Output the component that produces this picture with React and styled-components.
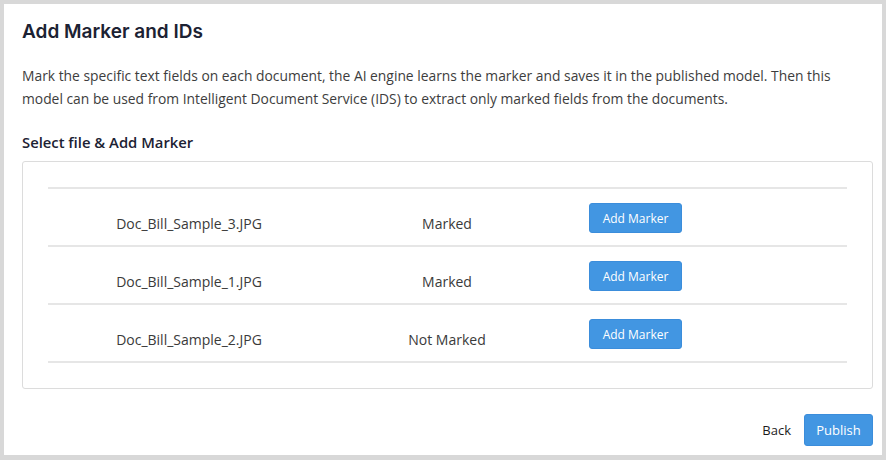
import styled, { createGlobalStyle } from 'styled-components';

const GlobalStyle = createGlobalStyle`
  html, body {
    margin: 0;
    padding: 0;
    background: #d8d8d8;
  }
  body {
    font-family: "Open Sans", "Noto Sans", sans-serif;
  }
`;

const files = [
  { name: 'Doc_Bill_Sample_3.JPG', status: 'Marked' },
  { name: 'Doc_Bill_Sample_1.JPG', status: 'Marked' },
  { name: 'Doc_Bill_Sample_2.JPG', status: 'Not Marked' },
];

const App = () => {
  return (
    <>
      <GlobalStyle />
      <StyledFrame>
        <StyledPanel>
          <StyledTitle>Add Marker and IDs</StyledTitle>
          <StyledIntro>
            Mark the specific text fields on each document, the AI engine learns the marker and saves it in the published model. Then this
            model can be used from Intelligent Document Service (IDS) to extract only marked fields from the documents.
          </StyledIntro>
          <StyledSectionTitle>Select file &amp; Add Marker</StyledSectionTitle>
          <StyledCard>
            <StyledList>
              {files.map((file) => (
                <StyledRow key={file.name}>
                  <StyledCell>{file.name}</StyledCell>
                  <StyledCell>{file.status}</StyledCell>
                  <StyledActionCell>
                    <StyledButton type="button">Add Marker</StyledButton>
                  </StyledActionCell>
                </StyledRow>
              ))}
            </StyledList>
          </StyledCard>
          <StyledFooter>
            <StyledLinkButton type="button">Back</StyledLinkButton>
            <StyledButton type="button" $size="large">Publish</StyledButton>
          </StyledFooter>
        </StyledPanel>
      </StyledFrame>
    </>
  );
};

export default App;

const StyledFrame = styled.div`
  padding: 4px 4px 5px 4px;
  height: 460px;
  box-sizing: border-box;
`;
const StyledPanel = styled.main`
  background: #fff;
  height: 100%;
  box-sizing: border-box;
  padding: 16px 9px 0 18px;
  display: flex;
  flex-direction: column;
`;
const StyledTitle = styled.h1`
  margin: 0;
  font-family: Inter, "Noto Sans", sans-serif;
  font-size: 19px;
  font-weight: 600;
  line-height: 24px;
  color: #1c2233;
`;
const StyledIntro = styled.p`
  margin: 20px 0 0;
  font-size: 13.85px;
  line-height: 23px;
  color: #3d3d3d;
`;
const StyledSectionTitle = styled.h2`
  margin: 22px 0 0;
  font-size: 14.8px;
  font-weight: 600;
  line-height: 20px;
  color: #1c2233;
`;
const StyledCard = styled.section`
  margin-top: 9px;
  border: 1px solid #dcdcdc;
  border-radius: 3px;
  padding: 25px;
`;
const StyledList = styled.div`
  border-top: 2px solid #e6e6e6;
`;
const StyledRow = styled.div`
  display: grid;
  grid-template-columns: 282px 234px 1fr;
  align-items: start;
  height: 56px;
  border-bottom: 2px solid #e6e6e6;
`;
const StyledCell = styled.div`
  padding-top: 25px;
  text-align: center;
  font-size: 14px;
  line-height: 20px;
  color: #3a3a3a;
`;
const StyledActionCell = styled.div`
  padding: 14px 0 0 25px;
`;
const StyledButton = styled.button`
  font-family: "Open Sans", "Noto Sans", sans-serif;
  font-size: ${({ $size }) => ($size === 'large' ? '13px' : '12px')};
  font-weight: 500;
  color: #fff;
  background: #4296e2;
  border: 1px solid #3b8ddb;
  border-radius: 3px;
  height: ${({ $size }) => ($size === 'large' ? '32px' : '30px')};
  width: ${({ $size }) => ($size === 'large' ? '69px' : '93px')};
  padding: 0;
  cursor: pointer;
`;
const StyledFooter = styled.footer`
  margin-top: 25px;
  display: flex;
  justify-content: flex-end;
  align-items: center;
  gap: 13px;
`;
const StyledLinkButton = styled.button`
  background: none;
  border: none;
  padding: 0;
  font-family: "Open Sans", "Noto Sans", sans-serif;
  font-size: 13px;
  color: #1c1c1c;
  cursor: pointer;
`;
